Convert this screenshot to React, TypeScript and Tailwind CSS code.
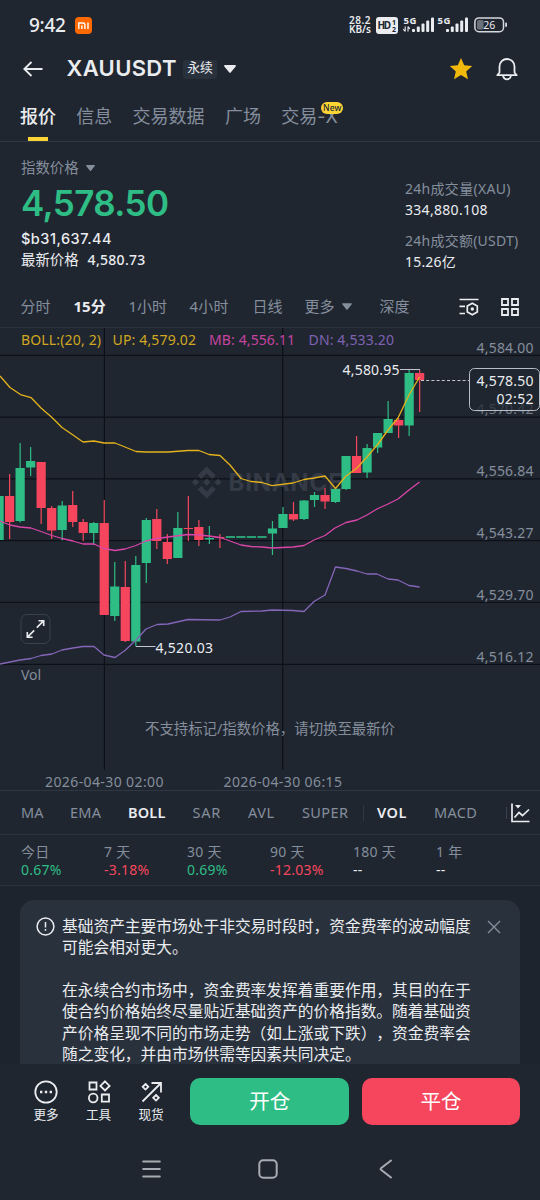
type Candle = {
  open: "up" | "down";
  top: number;
  bottom: number;
  high: number;
  low: number;
};

const c = (
  open: Candle["open"],
  top: number,
  bottom: number,
  high: number,
  low: number
): Candle => ({ open, top, bottom, high, low });

const candles: Array<Candle> = [
  c("up", 496, 540, 496, 540),
  c("down", 496, 522, 474, 539),
  c("up", 468, 521, 443, 522.5),
  c("up", 461, 467.5, 447, 476),
  c("down", 462, 508, 462, 524),
  c("down", 508, 530.5, 506, 539),
  c("up", 505.5, 530, 501, 540.5),
  c("down", 505, 522, 491, 527),
  c("down", 522, 533, 519, 541),
  c("up", 523, 533, 522, 545),
  c("down", 523, 615, 500, 615),
  c("up", 586.5, 616, 562, 621),
  c("down", 587, 641, 561, 642),
  c("up", 565, 641.5, 556, 646),
  c("up", 520, 563, 518, 583),
  c("down", 519, 541, 509, 549),
  c("down", 542, 559, 534, 564),
  c("up", 528, 558, 512, 558),
  c("down", 528, 529, 496, 541),
  c("down", 527, 540, 520, 546),
  c("up", 538, 539.5, 526, 544),
  c("down", 537, 538, 534, 548),
  c("up", 536.2, 537.8, 537, 537),
  c("up", 536.2, 537.8, 537, 537),
  c("up", 536.2, 537.8, 537, 537),
  c("up", 536.2, 537.8, 537, 537),
  c("up", 528.5, 533.5, 521, 555),
  c("up", 514, 528, 507, 528),
  c("down", 514, 519.5, 502, 521),
  c("up", 500.5, 519, 500, 520),
  c("up", 495, 500, 492, 507),
  c("down", 495, 501.5, 488, 509),
  c("up", 489, 502, 489, 503),
  c("up", 456, 489, 456, 490),
  c("down", 456, 473, 436, 473),
  c("up", 448, 472.5, 444, 478),
  c("up", 433, 447.5, 433, 453),
  c("up", 419, 433, 401, 433),
  c("down", 420, 425.5, 418, 438),
  c("up", 373, 425.5, 369, 436),
  c("down", 373, 380, 370, 412),
];

const upperBand =
  "0,376 10,387.5 20.5,394.5 31,397.5 41,408 52,417.5 62,427.5 73,435 83,442 94,441 104,443 115,443 125,447 136,451.5 146,452 168,452 188,450.5 199,450.5 209,454.5 220,455.5 230,465 241,478.5 251,481.5 262,482.5 272,485.7 293,483 304,479.5 314,478 325,476 335.5,488.5 346,476 357,468 367,457 378,444 388,430 398,418 409,395 419.6,377";
const middleBand =
  "0,521 10,525 20,527 31,528 41,531.5 52,535.5 62,538.5 73,541 83,544 94,544 104,548.5 115,550.5 125,549 136,545.5 146,541 157,538.5 168,537 188,534.5 199,535 209,536 220,537.5 230,541 241,545 251,546.5 262,547 272,548 293,547 304,545.5 314,540 325,535.5 335,528 346,522.5 357,520 367,515 377,509 388,504 398,499 409,490 419.6,482";
const lowerBand =
  "0,664 20,660 31,658.5 41,655.5 52,654 62,650 73,648 83,646.5 94,646.5 104,655 115,657.5 125,650.5 136,640 146,629 157,624.5 168,624 188,619.5 220,620 230,617 241,611.5 262,611 272,610 293,610.5 304,611.5 314,601.5 325,595 335.5,567 346,568.5 357,571 367,574 377,574 388,579 398,580 409,585.5 419.6,587";

const gridLines = [
  { y: 355.4, label: "4,584.00" },
  { y: 417.1, label: "4,570.42" },
  { y: 478.9, label: "4,556.84" },
  { y: 540.6, label: "4,543.27" },
  { y: 602.4, label: "4,529.70" },
  { y: 664.3, label: "4,516.12" },
];

const stats = [
  { label: "今日", value: "0.67%", color: "text-[#2ebd85]" },
  { label: "7 天", value: "-3.18%", color: "text-[#f6465d]" },
  { label: "30 天", value: "0.69%", color: "text-[#2ebd85]" },
  { label: "90 天", value: "-12.03%", color: "text-[#f6465d]" },
  { label: "180 天", value: "--", color: "text-[#eaecef]" },
  { label: "1 年", value: "--", color: "text-[#eaecef]" },
];

function Caret({ className }: { className: string }) {
  return (
    <svg viewBox="0 0 12 8" className={className} fill="currentColor">
      <path d="M1 0h10c.8 0 1.2.8.7 1.400L6.700 7.500a.9.9 0 0 1-1.400 0L.3 1.400C-.2.8.200 0 1 0z" />
    </svg>
  );
}

function Signal({ arrows }: { arrows?: boolean }) {
  return (
    <svg width="32" height="18" viewBox="0 0 32 18" className="overflow-visible" fill="#eaecef">
      <text x="0.500" y="8" fontSize="9.500" fontWeight="700" textLength="13">
        5G
      </text>
      {arrows && (
        <path d="M2.200 10.500v5M2.200 15.500L.3 13.200M5 15.500v-5M5 10.500l1.900 2.300" stroke="#eaecef" strokeWidth="1.100" />
      )}
      <rect x="9" y="13" width="3" height="3" rx="1" />
      <rect x="13.800" y="10.500" width="3" height="5.500" rx="1" />
      <rect x="18.500" y="7.500" width="3" height="8.500" rx="1" />
      <rect x="23.200" y="4.500" width="3" height="11.500" rx="1" />
      <rect x="28" y="1.500" width="3" height="14.500" rx="1" />
    </svg>
  );
}

function StatusBar() {
  return (
    <div className="flex h-[46px] items-center pt-[4px] pl-[29px] text-[#eaecef]">
      <span className="w-[46px] text-[19px] font-medium tracking-[-0.3px]">9:42</span>
      <svg width="17" height="17" viewBox="0 0 17 17">
        <rect width="17" height="17" rx="4" fill="#ff6900" />
        <path d="M3.800 12V6h4.200c1.200 0 1.900.700 1.900 1.900V12M6.900 8.300V12M13 5.500V12" fill="none" stroke="#fff" strokeWidth="1.400" />
      </svg>
      <div className="ml-[257px] w-[27px] text-[10px] leading-[9.500px] font-semibold">
        <div className="tracking-[0.500px]">28.2</div>
        <div>KB/s</div>
      </div>
      <svg width="22" height="17" viewBox="0 0 22 17">
        <rect width="22" height="17" rx="3" fill="#eaecef" />
        <g fill="#202630" fontWeight="700">
          <text x="1.500" y="12" fontSize="10" textLength="13.500">HD</text>
          <text x="16" y="7.800" fontSize="7">1</text>
          <text x="16" y="15.300" fontSize="7">2</text>
        </g>
      </svg>
      <div className="ml-[5px] flex gap-[2px]">
        <Signal arrows />
        <Signal />
      </div>
      <svg width="34" height="16" viewBox="0 0 34 16" className="ml-[5px]">
        <rect x="0.900" y="0.900" width="28.600" height="13.800" rx="4" fill="none" stroke="#d5d8dd" strokeWidth="1.500" />
        <rect x="3" y="3" width="6.500" height="9.600" rx="1.500" fill="#6b717b" />
        <rect x="31.200" y="5.500" width="1.800" height="4.500" rx="0.900" fill="#d5d8dd" />
        <text x="15.200" y="11.600" textAnchor="middle" fontSize="10.500" fill="#eaecef">26</text>
      </svg>
    </div>
  );
}

function Header() {
  return (
    <div className="flex h-[46px] items-center pl-[23px] text-[#eaecef]">
      <svg width="20" height="16" viewBox="0 0 20 16" fill="none" stroke="currentColor" strokeWidth="1.800">
        <path d="M8.500 1L1.300 8l7.200 7M1.500 8H19.500" />
      </svg>
      <span className="ml-[23.500px] w-[116.500px] pb-px font-['Inter',sans-serif] text-[22px] font-semibold tracking-[0.350px]">XAUUSDT</span>
      <span className="flex h-[19px] w-[34px] items-center justify-center rounded-[3px] bg-[#29313d] pb-[2px] text-[12.800px]">永续</span>
      <Caret className="ml-[7px] h-[8px] w-[12px]" />
      <svg width="24" height="24" viewBox="0 0 24 24" className="ml-[213px]" fill="#f0b90b">
        <path d="M12 1l3.200 7.300 8 .7-6 5.400 1.800 7.900-7-4.200-7 4.200 1.800-7.900L.8 9l8-.7z" />
      </svg>
      <svg width="24" height="24" viewBox="0 0 24 24" className="ml-[22px]" fill="none" stroke="currentColor" strokeWidth="1.800">
        <path d="M4.500 15.500V9.500a7.500 7.500 0 0 1 15 0v6l2.200 2.700H2.300z" strokeLinejoin="round" />
        <path d="M8 19c.7 2.200 2.200 3.300 4 3.300s3.300-1.100 4-3.300" />
      </svg>
    </div>
  );
}

function Tabs() {
  return (
    <div className="flex h-[50px] gap-[20.300px] border-b border-[#2f3744] pl-[20px] text-[18px] leading-[49px] whitespace-nowrap text-[#848e9c]">
      <div className="relative font-medium text-[#eaecef]">
        报价
        <span className="absolute bottom-0 left-[8px] h-[4px] w-[20px] bg-[#fcd535]" />
      </div>
      <div>信息</div>
      <div>交易数据</div>
      <div>广场</div>
      <div className="relative">
        交易<span className="font-['Inter',sans-serif]">-X</span>
        <span className="absolute top-[10px] left-[40px] h-[12px] w-[22px] rounded-full bg-[#fcd535] text-center text-[8.500px] leading-[12px] font-medium text-[#202630]">
          New
        </span>
      </div>
    </div>
  );
}

function PriceSummary() {
  return (
    <div className="flex h-[144px] justify-between pr-[21px] pl-[21px] text-[14px] text-[#eaecef]">
      <div>
        <div className="mt-[16px] flex h-[20px] items-center text-[14.400px] text-[#848e9c]">
          指数价格
          <Caret className="ml-[7px] h-[6px] w-[9px]" />
        </div>
        <div className="mt-[5px] h-[40px] font-['Inter',sans-serif] text-[35px] leading-[40px] font-semibold tracking-[-0.600px] text-[#2ebd85]">4,578.50</div>
        <div className="mt-[5px] h-[21px] font-['Inter',sans-serif] text-[14.500px] leading-[21px] font-medium tracking-[0.500px]">$b31,637.44</div>
        <div className="flex h-[22px] items-center pb-px">
          <span className="mr-[9px] text-[14.400px]">最新价格</span>
          <span className="font-medium tracking-[0.300px]">4,580.73</span>
        </div>
      </div>
      <div className="w-[114px] pt-[36px] leading-[21px] whitespace-nowrap">
        <div className="tracking-[0.300px] text-[#848e9c]">24h成交量(XAU)</div>
        <div className="tracking-[0.300px]">334,880.108</div>
        <div className="mt-[9.500px] tracking-[0.250px] text-[#848e9c]">24h成交额(USDT)</div>
        <div className="tracking-[0.200px]">15.26亿</div>
      </div>
    </div>
  );
}

function Intervals() {
  return (
    <div className="flex h-[41px] items-center pl-[20.500px] text-[15px] whitespace-nowrap text-[#848e9c]">
      <div className="w-[53px]">分时</div>
      <div className="w-[55px] font-bold text-[#eaecef]">15分</div>
      <div className="w-[61px]">1小时</div>
      <div className="w-[63px] tracking-[0.200px]">4小时</div>
      <div className="w-[52px]">日线</div>
      <div className="flex w-[75px] items-center">
        更多
        <Caret className="ml-[7px] h-[7px] w-[10px]" />
      </div>
      <div className="w-[79px]">深度</div>
      <svg width="20" height="20" viewBox="0 0 20 20" fill="none" stroke="#eaecef" strokeWidth="1.700">
        <path d="M0.500 2.500h19M0.500 9.300H6M0.500 16.500H6" />
        <path d="M13.300 6.200l5 2.900v5.800l-5 2.900-5-2.900V9.100z" />
        <circle cx="13.300" cy="12" r="1.700" fill="#eaecef" stroke="none" />
      </svg>
      <svg width="20" height="20" viewBox="0 0 20 20" className="ml-[21px]" fill="none" stroke="#eaecef" strokeWidth="1.800">
        <path d="M2 2h6v6H2zM12 2h6v6h-6zM2 12h6v6H2zM12 12h6v6h-6z" />
      </svg>
    </div>
  );
}

function Chart() {
  return (
    <svg width="540" height="463" viewBox="0 327 540 463" className="block" fontSize="14">
      <path d="M0 327.500H540" stroke="#2b323d" />
      <g stroke="#0d1117" strokeWidth="1.200">
        {gridLines.map((line) => (
          <path key={line.y} d={`M0 ${line.y}H540`} />
        ))}
        <path d="M104.400 328V770M282.700 328V770" />
      </g>

      <g fill="#343b46">
        <path d="M206.700 466.500l9 9-3.500 3.500-5.500-5.500-5.500 5.500-3.500-3.500zM206.700 498.500l9-9-3.500-3.500-5.500 5.500-5.500-5.500-3.500 3.500zM206.700 478.500l3.700 3.700-3.700 3.700-3.700-3.700zM195.500 478.700l3.600 3.500-3.600 3.600-3.600-3.600zM218 478.700l3.600 3.500-3.600 3.600-3.600-3.600z" />
        <text x="228.500" y="491" fontSize="24" fontWeight="700" textLength="114" className="font-['Inter',sans-serif]">
          BINANCE
        </text>
      </g>

      {candles.map((candle, index) => {
        const x = -0.9 + index * 10.514;
        const color = candle.open === "up" ? "#2ebd85" : "#f6465d";
        return (
          <g key={index} fill={color}>
            <rect x={x - 0.6} y={candle.high} width="1.200" height={candle.low - candle.high} />
            <rect x={x - 4.6} y={candle.top} width="9.200" height={candle.bottom - candle.top} />
          </g>
        );
      })}

      <g fill="none" strokeWidth="1.300" strokeLinejoin="round">
        <polyline points={upperBand} stroke="#e3b21c" />
        <polyline points={middleBand} stroke="#d945a8" />
        <polyline points={lowerBand} stroke="#8465b8" />
      </g>

      <text x="21" y="345" fill="#d0a71f" textLength="80">BOLL:(20, 2)</text>
      <text x="112.500" y="345" fill="#d0a71f" textLength="83.500">UP: 4,579.02</text>
      <text x="209" y="345" fill="#c644a0" textLength="86">MB: 4,556.11</text>
      <text x="308.500" y="345" fill="#7f62b3" textLength="85.500">DN: 4,533.20</text>

      <g fill="#848e9c">
        {gridLines.map((line) => (
          <text
            key={line.label}
            x="476.500"
            y={line.y - 2.8}
            textLength="57"
            opacity={line.label === "4,570.42" ? 0.8 : 1}
          >
            {line.label}
          </text>
        ))}
        <text x="21" y="679.500" textLength="20">Vol</text>
        <text x="45" y="787" textLength="118.500">2026-04-30 02:00</text>
        <text x="223.500" y="787" textLength="118.500">2026-04-30 06:15</text>
      </g>
      <text x="145" y="734" textLength="250" fontSize="14.400" fill="#848e9c">
        不支持标记/指数价格，请切换至最新价
      </text>

      <g fill="#eaecef">
        <text x="342.500" y="375" textLength="57">4,580.95</text>
        <text x="155.500" y="652.500" textLength="57.500">4,520.03</text>
      </g>
      <path d="M400 369.500H420M135.800 646.500H155.500" stroke="#c3c7cd" fill="none" />
      <path d="M421 380.500H469" stroke="#c3c7cd" strokeDasharray="3 2.200" />

      <rect x="469.500" y="368.500" width="70" height="42" rx="5" fill="#202630" fillOpacity="0.700" stroke="#b7bdc6" />
      <g fill="#eaecef">
        <text x="476.500" y="385.500" textLength="57">4,578.50</text>
        <text x="496.500" y="404" textLength="37">02:52</text>
      </g>

      <rect x="21" y="614.500" width="29" height="29" rx="6" fill="#202630" stroke="#39414d" />
      <path
        d="M38.500 620.700H43.700V626M43.300 621.100L36.800 627.600M27.300 632V637.300H32.600M27.700 636.900L34.200 630.400"
        fill="none"
        stroke="#eaecef"
        strokeWidth="1.600"
      />
    </svg>
  );
}

function Indicators() {
  return (
    <div className="flex h-[44px] items-center border-t border-[#2f3744] pl-[21px] text-[14.500px] whitespace-nowrap text-[#848e9c]">
      <div className="w-[49px]">MA</div>
      <div className="w-[58px] tracking-[0.300px]">EMA</div>
      <div className="w-[64.500px] font-semibold tracking-[0.200px] text-[#eaecef]">BOLL</div>
      <div className="w-[55.500px] tracking-[0.700px]">SAR</div>
      <div className="w-[54px] tracking-[0.500px]">AVL</div>
      <div className="w-[61px] tracking-[0.400px]">SUPER</div>
      <div className="mr-[13px] h-[16px] w-px bg-[#2f3744]" />
      <div className="w-[57px] font-semibold tracking-[0.600px] text-[#eaecef]">VOL</div>
      <div className="w-[72px] tracking-[0.300px]">MACD</div>
      <div className="mr-[4px] h-[12px] w-px bg-[#39414d]" />
      <svg width="19" height="20" viewBox="0 0 19 20" fill="none" stroke="#eaecef" strokeWidth="1.700">
        <path d="M1 0.500V18.500H18.500M3.500 14.500L8 9.500l3.500 3L18 6.500" />
        <path d="M4 2h6L7 5.500z" fill="#eaecef" stroke="none" />
      </svg>
    </div>
  );
}

function Stats() {
  return (
    <div className="flex h-[52px] border-y border-[#2b323d] pt-[8px] pl-[21px] text-[14px] leading-[18px] tracking-[0.250px]">
      {stats.map((stat) => (
        <div key={stat.label} className="w-[83px]">
          <div className="text-[#848e9c]">{stat.label}</div>
          <div className={stat.color}>{stat.value}</div>
        </div>
      ))}
    </div>
  );
}

function Notice() {
  return (
    <div className="h-[178px] bg-[#1e242d] px-[20px] pt-[14px]">
      <div className="flex h-[164px] overflow-hidden rounded-t-[14px] bg-[#29313d] pt-[16px] pl-[16px] text-[#eaecef]">
        <svg width="19" height="19" viewBox="0 0 19 19" className="mt-[1px] shrink-0" fill="none" stroke="currentColor" strokeWidth="1.500">
          <circle cx="9.500" cy="9.500" r="8.400" />
          <path d="M9.500 5v5.500M9.500 12v1.800" />
        </svg>
        <div className="ml-[7px] w-[415px] text-[15.720px] leading-[21.400px] whitespace-nowrap [text-spacing-trim:space-all]">
          <p>基础资产主要市场处于非交易时段时，资金费率的波动幅度</p>
          <p>可能会相对更大。</p>
          <p className="mt-[21px]">在永续合约市场中，资金费率发挥着重要作用，其目的在于</p>
          <p>使合约价格始终尽量贴近基础资产的价格指数。随着基础资</p>
          <p>产价格呈现不同的市场走势（如上涨或下跌），资金费率会</p>
          <p>随之变化，并由市场供需等因素共同决定。</p>
        </div>
        <svg width="14" height="14" viewBox="0 0 14 14" className="mt-[4px] ml-[10px] shrink-0" stroke="#848e9c" strokeWidth="1.400">
          <path d="M1 1l12 12M13 1L1 13" />
        </svg>
      </div>
    </div>
  );
}

function ActionBar() {
  return (
    <div className="flex h-[73px] pt-[14px] pl-[20px] text-[12.600px] text-[#eaecef]">
      <div className="flex w-[52px] flex-col items-center pt-[2px]">
        <svg width="24" height="24" viewBox="0 0 24 24" fill="none" stroke="currentColor" strokeWidth="1.800">
          <circle cx="12" cy="12" r="10.700" />
          <path d="M6 12h2.400M10.800 12h2.400M15.600 12H18" strokeWidth="2.400" />
        </svg>
        <span className="mt-[2px] leading-[17px]">更多</span>
      </div>
      <div className="flex w-[53px] flex-col items-center pt-[2px]">
        <svg width="24" height="24" viewBox="0 0 24 24" fill="none" stroke="currentColor" strokeWidth="1.800">
          <path d="M2.500 2.500h7v7h-7zM14.800 14.500h7.200v7.200h-7.200zM18 1.300l4.600 4.600-4.600 4.600-4.600-4.600z" />
          <circle cx="6.200" cy="18" r="4.300" />
        </svg>
        <span className="mt-[2px] leading-[17px]">工具</span>
      </div>
      <div className="flex w-[52px] flex-col items-center pt-[2px]">
        <svg width="24" height="24" viewBox="0 0 24 24" fill="none" stroke="currentColor" strokeWidth="1.800">
          <path d="M3.500 21.500L21.500 3.500M12.500 3H22v9.500" />
          <path d="M6.500 4l2.800 2.800-2.800 2.800-2.800-2.800zM17 15l2.800 2.800-2.800 2.800-2.800-2.800z" />
        </svg>
        <span className="mt-[2px] leading-[17px]">现货</span>
      </div>
      <div className="ml-[13.400px] flex gap-[13px] text-[20.500px] leading-[46px] text-white">
        <button className="h-[47px] w-[158.500px] rounded-[10px] bg-[#2ebd85] pb-px">开仓</button>
        <button className="h-[47px] w-[158px] rounded-[10px] bg-[#f6465d] pb-px">平仓</button>
      </div>
    </div>
  );
}

function NavBar() {
  return (
    <div className="flex h-[63px] items-center pt-[1px] pl-[142px]">
      <svg width="19" height="20" viewBox="0 0 19 20" stroke="#a7abb2" strokeWidth="2" strokeLinecap="round">
        <path d="M1.200 2.500h16.600M1.200 10h16.600M1.200 17.500h16.600" />
      </svg>
      <svg width="20" height="20" viewBox="0 0 20 20" className="ml-[97px]" fill="none" stroke="#a7abb2" strokeWidth="2">
        <rect x="1.300" y="1.300" width="17.400" height="17.400" rx="4" />
      </svg>
      <svg width="14" height="20" viewBox="0 0 14 20" className="ml-[101px]" fill="none" stroke="#a7abb2" strokeWidth="2" strokeLinecap="round" strokeLinejoin="round">
        <path d="M12 1.500L2 9.300q-.7.700 0 1.400L12 18.500" />
      </svg>
    </div>
  );
}

function App() {
  return (
    <div className="flex h-[1200px] w-[540px] flex-col overflow-hidden bg-[#202630] font-['Noto_Sans','Noto_Sans_CJK_SC',sans-serif]">
      <StatusBar />
      <Header />
      <Tabs />
      <PriceSummary />
      <Intervals />
      <Chart />
      <Indicators />
      <Stats />
      <Notice />
      <ActionBar />
      <NavBar />
    </div>
  );
}

export default App;
